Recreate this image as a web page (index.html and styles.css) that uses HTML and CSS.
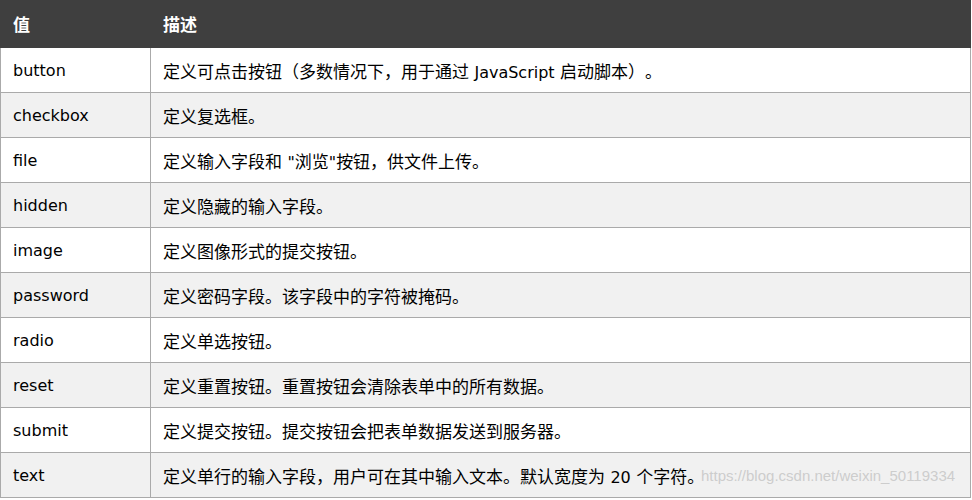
FILE: index.html
```html
<!DOCTYPE html>
<html lang="zh">
<head>
<meta charset="utf-8">
<link rel="stylesheet" href="styles.css">
</head>
<body>
<div class="wrap">
<table class="ref">
<thead>
<tr><th class="c1">值</th><th class="c2">描述</th></tr>
</thead>
<tbody>
<tr><td class="c1">button</td><td class="c2">定义可点击按钮（多数情况下，用于通过 <span class="lat">JavaScript</span> 启动脚本）。</td></tr>
<tr><td class="c1">checkbox</td><td class="c2">定义复选框。</td></tr>
<tr><td class="c1">file</td><td class="c2">定义输入字段和 <span class="lat">"</span>浏览<span class="lat">"</span>按钮，供文件上传。</td></tr>
<tr><td class="c1">hidden</td><td class="c2">定义隐藏的输入字段。</td></tr>
<tr><td class="c1">image</td><td class="c2">定义图像形式的提交按钮。</td></tr>
<tr><td class="c1">password</td><td class="c2">定义密码字段。该字段中的字符被掩码。</td></tr>
<tr><td class="c1">radio</td><td class="c2">定义单选按钮。</td></tr>
<tr><td class="c1">reset</td><td class="c2">定义重置按钮。重置按钮会清除表单中的所有数据。</td></tr>
<tr><td class="c1">submit</td><td class="c2">定义提交按钮。提交按钮会把表单数据发送到服务器。</td></tr>
<tr><td class="c1">text</td><td class="c2">定义单行的输入字段，用户可在其中输入文本。默认宽度为 <span class="lat">20</span> 个字符。</td></tr>
</tbody>
</table>
<div class="watermark">https://blog.csdn.net/weixin_50119334</div>
</div>
</body>
</html>
```
FILE: styles.css
```css
html, body {
  margin: 0;
  padding: 0;
  background: #ffffff;
}
.wrap {
  position: relative;
  width: 972px;
}
.ref {
  width: 971px;
  border-collapse: collapse;
  font-family: "DejaVu Sans", "Noto Sans CJK SC", sans-serif;
  font-size: 16px;
  color: #000;
  table-layout: fixed;
  text-spacing-trim: space-all;
}
.ref th {
  background: #3f3f3f;
  color: #fff;
  font-weight: bold;
  text-align: left;
  height: 47px;
  padding: 0 12px;
  box-sizing: border-box;
  border: 1px solid #3f3f3f;
  border-top: none;
  font-size: 17px;
}
.ref td {
  height: 45px;
  box-sizing: border-box;
  padding: 2px 12px 0;
  border: 1px solid #aaaaaa;
  vertical-align: middle;
}
.ref .c1 {
  width: 150px;
}
.ref td.c2 {
  font-size: 17px;
}
.ref .lat {
  font-size: 16px;
}
.ref tbody tr:nth-child(even) td {
  background: #f1f1f1;
}
.watermark {
  position: absolute;
  left: 701px;
  top: 467px;
  font-family: "Liberation Sans", Arial, sans-serif;
  font-size: 15px;
  color: rgba(195, 195, 195, 0.8);
}
```
